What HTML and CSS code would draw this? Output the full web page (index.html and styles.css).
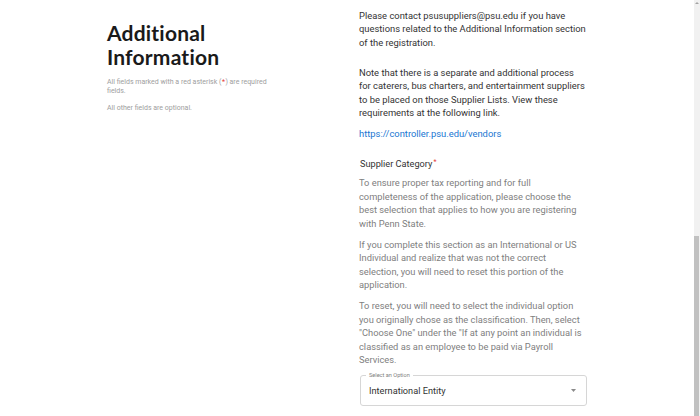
FILE: index.html
```html
<!DOCTYPE html>
<html lang="en">
<head>
<meta charset="utf-8">
<title>Additional Information</title>
<link rel="stylesheet" href="styles.css">
</head>
<body>
<main class="page">
  <section class="intro">
    <h1 class="title">Additional Information</h1>
    <p class="hint">All fields marked with a red asterisk (<span class="req star">*</span>) are required <span class="wrap">fields.</span></p>
    <p class="hint">All other fields are optional.</p>
  </section>
  <section class="form">
    <p class="info">Please contact psusuppliers@psu.edu if you have questions related to the Additional Information section of the registration.</p>
    <p class="info note">Note that there is a separate and additional process for caterers, bus charters, and entertainment suppliers to be placed on those Supplier Lists. View these requirements at the following link.</p>
    <p class="info"><a class="link" href="#">https://controller.psu.edu/vendors</a></p>
    <h2 class="field-label">Supplier Category<span class="req sup">*</span></h2>
    <p class="desc">To ensure proper tax reporting and for full completeness of the application, please choose the best selection that applies to how you are registering with Penn State.</p>
    <p class="desc">If you complete this section as an International or US Individual and realize that was not the correct selection, you will need to reset this portion of the application.</p>
    <p class="desc">To reset, you will need to select the individual option you originally chose as the classification. Then, select "Choose One" under the "If at any point an individual is classified as an employee to be paid via Payroll Services.</p>
    <div class="select">
      <span class="select-label">Select an Option</span>
      <span class="select-value">International Entity</span>
      <svg class="caret" width="5" height="3" viewBox="0 0 5 3"><path d="M0 0h5L2.5 3z" fill="#8a8a8a"/></svg>
    </div>
  </section>
</main>
<div class="scrollbar"><div class="scroll-arrow"></div><div class="scroll-thumb"></div></div>
</body>
</html>
```

FILE: styles.css
```css
html, body {
  margin: 0;
  padding: 0;
  background: #ffffff;
  overflow: hidden;
}
body {
  font-family: Roboto, "Liberation Sans", sans-serif;
  color: #333333;
}
.page {
  display: grid;
  grid-template-columns: 252px 228px;
  padding: 9px 0 0 107px;
  width: 587px;
}
.title {
  font-family: Lato, "Open Sans", sans-serif;
  font-weight: 700;
  font-size: 21px;
  line-height: 24px;
  color: #1a1a1a;
  margin: 12px 0 9px 0;
  width: 140px;
  letter-spacing: 0.2px;
}
.hint {
  font-size: 7px;
  line-height: 9px;
  color: #9e9e9e;
  margin: 0 0 8px 0;
  width: 168px;
}
.wrap {
  display: inline-block;
}
.req {
  color: #e53935;
}
.star {
  display: inline-block;
  margin: 0 0.5px;
}
.sup {
  font-size: 7px;
  vertical-align: 3px;
  margin-left: 1px;
}
.info {
  font-size: 9.4px;
  line-height: 13.4px;
  margin: 0 0 16.5px 0;
  color: #333333;
}
.note {
  margin-bottom: 7.5px;
}
.link {
  color: #1976d2;
  text-decoration: none;
}
.field-label {
  font-size: 9.2px;
  line-height: 13.4px;
  font-weight: 400;
  margin: -1px 0 6px 1px;
  color: #333333;
}
.desc {
  font-size: 9.3px;
  line-height: 13.6px;
  color: #808080;
  margin: 0 0 7px 0;
}
.select {
  position: relative;
  margin-top: 8px;
  height: 29px;
  border: 1px solid #d6d6d6;
  border-radius: 3px;
  display: flex;
  align-items: center;
  justify-content: space-between;
  padding: 0 10px 0 8px;
  margin-left: 1px;
}
.select-label {
  position: absolute;
  top: -5px;
  left: 5px;
  padding: 0 3px;
  background: #ffffff;
  font-size: 5.6px;
  line-height: 8px;
  color: #808080;
}
.select-value {
  font-size: 9.2px;
  color: #333333;
}
.scrollbar {
  position: fixed;
  top: 0;
  right: 0;
  width: 6px;
  height: 416px;
  background: #f1f1f1;
}
.scroll-arrow {
  position: absolute;
  top: 2px;
  left: 1px;
  width: 0;
  height: 0;
  border-left: 2px solid transparent;
  border-right: 2px solid transparent;
  border-bottom: 2px solid #a3a3a3;
}
.scroll-thumb {
  position: absolute;
  top: 236px;
  left: 0;
  width: 5px;
  height: 180px;
  background: #c1c1c1;
}
```
